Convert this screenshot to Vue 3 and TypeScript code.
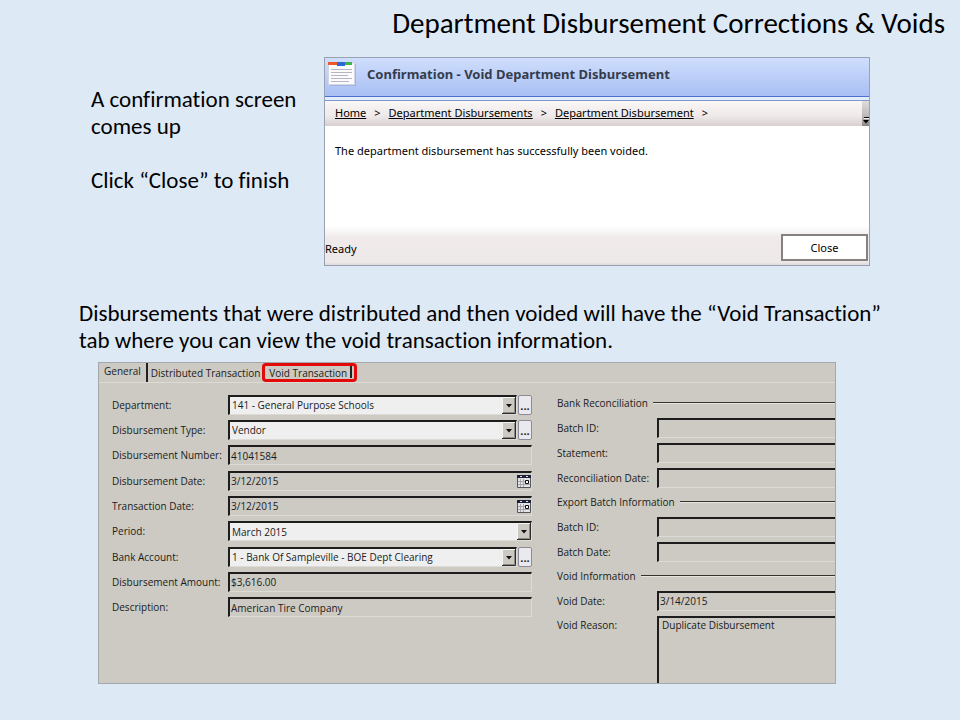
<script setup lang="ts">
import { ref } from 'vue'

type Kind = 'lookup' | 'select' | 'date' | 'text'

interface Field {
  id: string
  label: string
  kind: Kind
  value: string
}

interface Group {
  title: string
  fields: Field[]
}

const crumbs: string[] = ['Home', 'Department Disbursements', 'Department Disbursement']
const tabs: string[] = ['General', 'Distributed Transaction', 'Void Transaction']
const activeTab = ref('General')

const fields = ref<Field[]>([
  { id: 'department', label: 'Department:', kind: 'lookup', value: '141 - General Purpose Schools' },
  { id: 'type', label: 'Disbursement Type:', kind: 'lookup', value: 'Vendor' },
  { id: 'number', label: 'Disbursement Number:', kind: 'text', value: '41041584' },
  { id: 'disb-date', label: 'Disbursement Date:', kind: 'date', value: '3/12/2015' },
  { id: 'trans-date', label: 'Transaction Date:', kind: 'date', value: '3/12/2015' },
  { id: 'period', label: 'Period:', kind: 'select', value: 'March 2015' },
  { id: 'account', label: 'Bank Account:', kind: 'lookup', value: '1 - Bank Of Sampleville - BOE Dept Clearing' },
  { id: 'amount', label: 'Disbursement Amount:', kind: 'text', value: '$3,616.00' },
  { id: 'description', label: 'Description:', kind: 'text', value: 'American Tire Company' },
])

const groups = ref<Group[]>([
  {
    title: 'Bank Reconciliation',
    fields: [
      { id: 'rec-batch', label: 'Batch ID:', kind: 'text', value: '' },
      { id: 'statement', label: 'Statement:', kind: 'text', value: '' },
      { id: 'rec-date', label: 'Reconciliation Date:', kind: 'text', value: '' },
    ],
  },
  {
    title: 'Export Batch Information',
    fields: [
      { id: 'exp-batch', label: 'Batch ID:', kind: 'text', value: '' },
      { id: 'exp-date', label: 'Batch Date:', kind: 'text', value: '' },
    ],
  },
  {
    title: 'Void Information',
    fields: [{ id: 'void-date', label: 'Void Date:', kind: 'text', value: '3/14/2015' }],
  },
])

const reason = ref('Duplicate Disbursement')
</script>

<template>
  <main class="slide">
    <h1>Department Disbursement Corrections &amp; Voids</h1>

    <section class="intro">
      <div class="steps">
        <p>A confirmation screen comes up</p>
        <p>Click “Close” to finish</p>
      </div>

      <div class="dialog">
        <header class="dialog-head">
          <svg class="app-icon" viewBox="0 0 28 25" aria-hidden="true">
            <path d="M2 3H28V25H2Z" fill="#8f9ec4" opacity=".5" />
            <path d="M.5 2H26.500V23.500H.5Z" fill="#fbfbfd" stroke="#d4d6e2" />
            <path d="M0 1H9V4H0Z" fill="#f0562c" />
            <path d="M9 1H17V5H9Z" fill="#2c68d4" />
            <path d="M17 1H24V4H17Z" fill="#3fb24b" />
            <path d="M3 8.500H24M3 11.500H24M3 14.500H20M3 17.500H24M3 20.500H21" stroke="#b9b4c4" />
          </svg>
          <h2>Confirmation - Void Department Disbursement</h2>
        </header>
        <nav class="crumbs">
          <template v-for="crumb in crumbs" :key="crumb">
            <a href="#">{{ crumb }}</a>
            <span>&gt;</span>
          </template>
          <button class="overflow" type="button" aria-label="More">
            <svg viewBox="0 0 7 9" aria-hidden="true">
              <path d="M2 .5H7" stroke="#000" />
              <path d="M2 1.500H7" stroke="#f4f4f4" />
              <path d="M1 3H7L4 6.500Z" fill="#000" />
            </svg>
          </button>
        </nav>
        <p class="message">The department disbursement has successfully been voided.</p>
        <footer class="dialog-foot">
          <span>Ready</span>
          <button class="close" type="button">Close</button>
        </footer>
      </div>
    </section>

    <p class="note">
      Disbursements that were distributed and then voided will have the “Void Transaction”<br />
      tab where you can view the void transaction information.
    </p>

    <section class="form">
      <div class="tabs" role="tablist">
        <button
          v-for="tab in tabs"
          :key="tab"
          class="tab"
          :class="{ active: tab === activeTab, marked: tab === 'Void Transaction' }"
          type="button"
          role="tab"
          :aria-selected="tab === activeTab"
          @click="activeTab = tab"
        >
          {{ tab }}
        </button>
      </div>

      <div class="columns">
        <div class="left">
          <div v-for="f in fields" :key="f.id" class="row">
            <label :for="f.id">{{ f.label }}</label>
            <div class="control">
              <div v-if="f.kind === 'lookup' || f.kind === 'select'" class="combo sunken light">
                <select :id="f.id" v-model="f.value">
                  <option>{{ f.value }}</option>
                </select>
                <svg class="arrow" viewBox="0 0 14 17" aria-hidden="true">
                  <path d="M0 0H14V17H0Z" fill="#ccc9c2" />
                  <path d="M.5 17V.5H14" fill="none" stroke="#f4f4f2" />
                  <path d="M0 16.500H13.500V0" fill="none" stroke="#2c2c2c" />
                  <path d="M1 15.500H12.500V1" fill="none" stroke="#8c8a84" />
                  <path d="M4 7H10L7 10.500Z" fill="#111" />
                </svg>
              </div>
              <div v-else class="sunken plain">
                <input :id="f.id" v-model="f.value" type="text" readonly />
                <button v-if="f.kind === 'date'" class="calendar" type="button" aria-label="Pick date">
                  <svg viewBox="0 0 14 13" aria-hidden="true">
                    <path d="M.5 .5H13.500V12.500H.5Z" fill="#e4e4e4" stroke="#55555c" />
                    <path d="M0 0H14V3H0Z" fill="#1c1f38" />
                    <path d="M3 1.500H5M9 1.500H11" stroke="#e8e8ee" />
                    <path d="M3.500 4V12M6.500 4V12M1 6.500H8M1 9.500H13" stroke="#a5a5b0" />
                    <path d="M8.500 5.500H11.500V8.500H8.500Z" fill="#fff" stroke="#111" />
                  </svg>
                </button>
              </div>
              <button v-if="f.kind === 'lookup'" class="more" type="button" :aria-label="'Look up ' + f.label">...</button>
            </div>
          </div>
        </div>

        <div class="right">
          <template v-for="g in groups" :key="g.title">
            <h3>{{ g.title }}</h3>
            <div v-for="f in g.fields" :key="f.id" class="row">
              <label :for="f.id">{{ f.label }}</label>
              <div class="sunken plain">
                <input :id="f.id" v-model="f.value" type="text" readonly />
              </div>
            </div>
          </template>
          <div class="row reason">
            <label for="reason">Void Reason:</label>
            <textarea id="reason" v-model="reason" class="sunken" readonly></textarea>
          </div>
        </div>
      </div>
    </section>
  </main>
</template>

<style>
body {
  margin: 0;
  background: #dde9f5;
}
</style>

<style scoped>
* {
  box-sizing: border-box;
}

h1,
h2,
h3,
p {
  margin: 0;
  font-weight: 400;
}

button,
input,
select,
textarea {
  margin: 0;
  padding: 0;
  border: 0;
  border-radius: 0;
  background: none;
  color: inherit;
  font: inherit;
}

.slide {
  min-height: 100vh;
  padding-bottom: 36px;
  color: #000;
  font-family: Calibri, Carlito, Lato, sans-serif;
  font-variant-ligatures: none;
}

h1 {
  padding: 6px 15px 0;
  font-size: 29px;
  line-height: 34px;
  text-align: right;
}

.intro {
  display: flex;
  padding: 17px 90px 0 91px;
}

.steps {
  display: grid;
  flex: 0 0 233px;
  align-content: start;
  gap: 27px;
  padding: 29px 20px 0 0;
  font-size: 23px;
  line-height: 27px;
}

.dialog {
  flex: 1;
  border: 1px solid #98a2b4;
  background: #fff;
  font-family: "Segoe UI", "Noto Sans", sans-serif;
  font-size: 11px;
}

.dialog-head {
  display: flex;
  gap: 11px;
  height: 43px;
  padding: 3px;
  border-bottom: 1px solid #7f97cc;
  background: linear-gradient(#cfdefd, #a9bff3 38px, #4c70cc 38px, #4c70cc 39px, #e2ecfb 39px);
}

.app-icon {
  width: 28px;
  height: 25px;
}

.dialog-head h2 {
  color: #343c4c;
  font-size: 13px;
  font-weight: 700;
  line-height: 27px;
}

.crumbs {
  display: flex;
  gap: 8px;
  height: 25px;
  padding-left: 10px;
  background: linear-gradient(#faf7f7, #efe9e9 60%, #d8d0d0);
  line-height: 24px;
}

.crumbs a {
  color: #000;
}

.overflow {
  display: flex;
  align-items: flex-end;
  width: 7px;
  margin-left: auto;
  background: linear-gradient(#e2dddd, #bdb8b8 60%, #8a8686);
}

.overflow svg {
  width: 7px;
  height: 9px;
}

.message {
  height: 100px;
  padding: 17px 10px;
  line-height: 16px;
}

.dialog-foot {
  display: flex;
  align-items: center;
  justify-content: space-between;
  height: 39px;
  padding: 4px 1px 0 0;
  background: linear-gradient(#fff, #f0eaea 12px, #eee9e9 36px, #dedada);
}

.dialog-foot span {
  padding-top: 2px;
}

.close {
  width: 87px;
  height: 27px;
  border: 2px solid #878080;
  background: #fff;
}

.note {
  padding: 34px 60px 0 79px;
  font-size: 23px;
  line-height: 27px;
}

.form {
  min-height: 322px;
  margin: 8px 124px 0 98px;
  border: 1px solid #a3a8ac;
  background: #cccac2;
  color: #1b1b1b;
  font-family: "Segoe UI", "Open Sans", "Noto Sans", sans-serif;
  font-size: 10px;
}

.tabs {
  display: flex;
  align-items: flex-end;
  height: 20px;
  border-bottom: 1px solid #dddbd5;
}

.tab {
  height: 17px;
  padding: 0 2px 0 3px;
  line-height: 17px;
  white-space: nowrap;
}

.tab.active {
  height: 19px;
  padding: 0 5px 2px;
  border-right: 2px solid #222;
}

.tab.marked {
  display: flex;
  gap: 3px;
  height: 19px;
  padding-left: 4px;
  border: 3px solid #e20a0a;
  border-radius: 4px;
  line-height: 15px;
}

.tab.marked::after {
  width: 2px;
  height: 12px;
  background: #222;
  content: "";
}

.columns {
  display: grid;
  grid-template-columns: 420px 1fr;
  gap: 25px;
  padding: 8px 0 0 13px;
}

.left {
  display: grid;
  grid-auto-rows: 1fr;
  height: 228px;
  margin-top: 1px;
}

.row {
  display: grid;
  grid-template-columns: 116px 1fr;
  align-items: center;
}

label {
  white-space: nowrap;
}

.control {
  display: flex;
  gap: 1px;
}

.sunken {
  display: flex;
  flex: 1;
  min-width: 0;
  height: 20px;
  border: 1px solid #dddbd5;
  border-top: 2px solid #1d1d1d;
  border-left: 2px solid #1d1d1d;
}

.light {
  background: #efefef;
}

.sunken input {
  flex: 1;
  width: 0;
  padding-left: 1px;
}

.combo {
  position: relative;
}

.combo select {
  flex: 1;
  width: 0;
  padding-left: 2px;
  appearance: none;
}

.arrow {
  position: absolute;
  top: 0;
  right: 0;
  width: 14px;
  height: 17px;
  pointer-events: none;
}

.calendar {
  display: flex;
  align-items: center;
}

.calendar svg {
  width: 14px;
  height: 13px;
}

.more {
  width: 14px;
  height: 20px;
  border: 1px solid #8b8b9b;
  border-radius: 2px;
  background: #e9e9ee;
  font-size: 11px;
  font-weight: 700;
  line-height: 20px;
}

.right .row {
  grid-template-columns: 100px 1fr;
  height: 25px;
}

.right .sunken {
  border-right: 0;
}

h3 {
  display: flex;
  align-items: center;
  gap: 5px;
  height: 24px;
  font-size: 10px;
}

h3::after {
  flex: 1;
  border-top: 1px solid #33332f;
  border-bottom: 1px solid #e6e5df;
  content: "";
}

.right .reason {
  align-items: start;
  height: 70px;
}

.reason label {
  line-height: 24px;
}

textarea.sunken {
  height: 67px;
  margin-top: 3px;
  padding: 0 3px;
  border-bottom: 0;
  resize: none;
}
</style>
